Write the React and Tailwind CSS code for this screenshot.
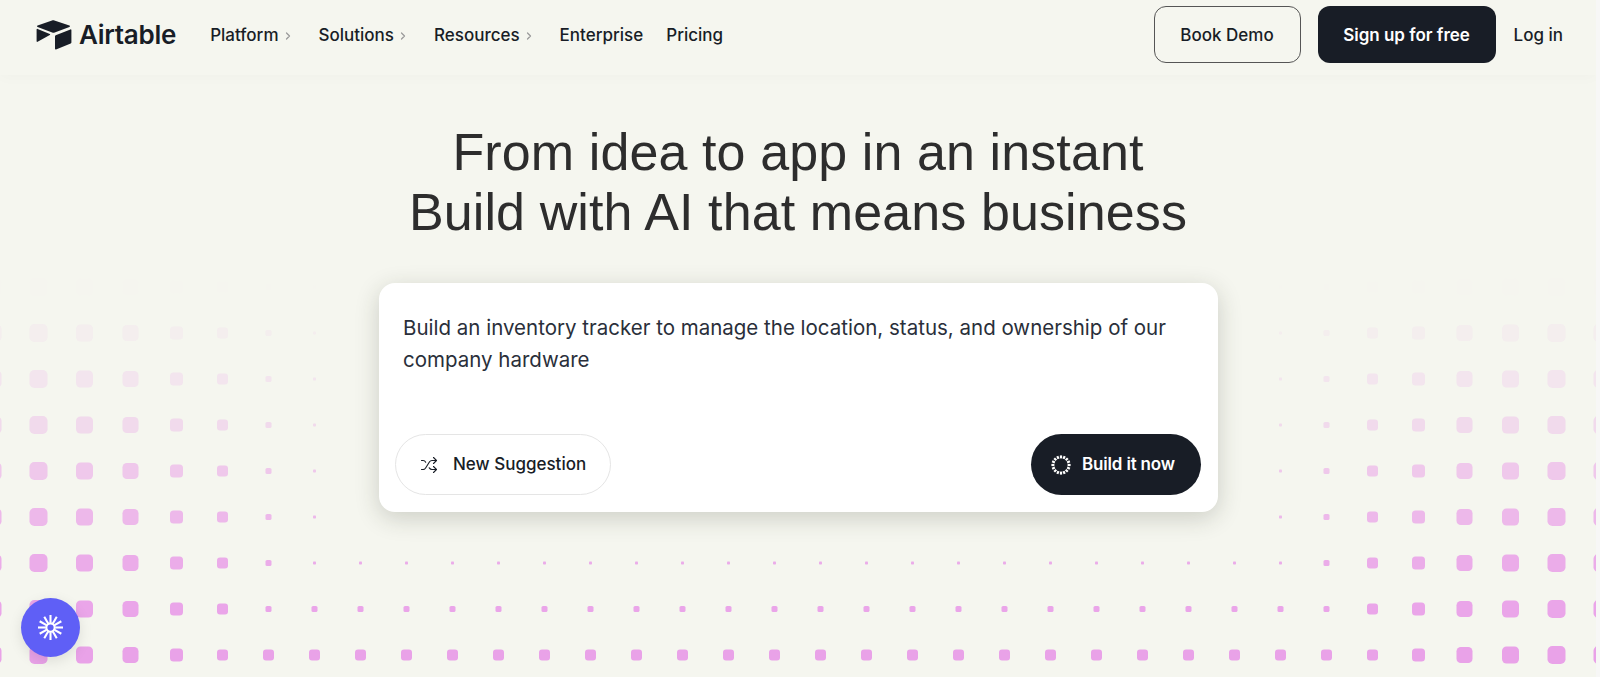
import { ChevronRight, Shuffle } from "lucide-react";

const inter = "font-['Inter',sans-serif]";

// dot field: size depends on distance from the page edge and on the row
const colSizes = [18, 18, 17, 16, 13, 11, 6, 3];
const rowSizes = { 7: 3, 8: 6, 9: 11 };
const rowAlpha = [0.004, 0.012, 0.1, 0.19, 0.33, 0.55, 0.74, 0.88, 0.97, 1];

function DotField() {
    const dots = [];
    for (let r = 0; r < 10; r++) {
        for (let c = 0; c < 36; c++) {
            const fromEdge = Math.min(c, 35 - c);
            const size = Math.max(colSizes[fromEdge] || 0, rowSizes[r] || 0);
            if (!size) continue;
            dots.push(
                <rect
                    key={r + "-" + c}
                    x={-7.5 + c * 46 - size / 2}
                    y={241 + r * 46 - size / 2}
                    width={size}
                    height={size}
                    rx={size * 0.27}
                    fill="#e9a2e8"
                    opacity={rowAlpha[r]}
                />
            );
        }
    }
    return (
        <svg className="absolute inset-0 w-full h-full" width="1596" height="677" viewBox="0 0 1596 677">
            {dots}
        </svg>
    );
}

function Logo() {
    return (
        <div className="flex items-center gap-[7px]">
            <svg width="36" height="30" viewBox="0 0 36 30" fill="#181d26">
                <path d="M16 .5 1.6 5.6c-.8.3-.8 1 0 1.3l14.6 5.7c.8.3 1.700.3 2.500 0l14.700-5.700c.8-.3.8-1 0-1.300L18.400.5c-.8-.3-1.600-.3-2.400 0Z" />
                <path d="M.6 9.600c0-.6.5-.9 1-.7l12.200 5.100c.5.2.5.800 0 1.100L1.600 21.800c-.5.300-1 0-1-.6Z" />
                <path d="M19 16.200c0-.4.3-.8.7-1l14.700-5.800c.5-.2 1 .1 1 .7v12.500c0 .4-.3.800-.7 1l-14.700 5.800c-.5.200-1-.1-1-.7Z" />
            </svg>
            <span className={`${inter} text-[26px] leading-none font-semibold tracking-[-0.01em] text-[#181d26]`}>Airtable</span>
        </div>
    );
}

function NavItem({ label, chevron }) {
    return (
        <a className="flex items-center gap-[3px] text-[17px] font-medium text-[#181d26]">
            {label}
            {chevron && <ChevronRight size={12} strokeWidth={2.5} className="mr-[2px] text-[#9a9a9a]" />}
        </a>
    );
}

function SparkRing() {
    const ticks = [];
    for (let i = 0; i < 16; i++) {
        ticks.push(
            <rect key={i} x="8.900" y="0.400" width="2.200" height="3" fill="white" transform={`rotate(${i * 22.5} 10 10)`} />
        );
    }
    return <svg width="20" height="20" viewBox="0 0 20 20">{ticks}</svg>;
}

function Burst() {
    const rays = [];
    for (let i = 0; i < 12; i++) {
        rays.push(
            <line key={i} x1="12" y1="7.500" x2="12" y2="0" stroke="white" strokeWidth="2" transform={`rotate(${i * 30} 12 12)`} />
        );
    }
    return (
        <svg width="25" height="25" viewBox="0 0 24 24" fill="none">
            {rays}
            <circle cx="12" cy="12" r="4" stroke="white" strokeWidth="2" />
        </svg>
    );
}

export default function App() {
    return (
        <div className={`${inter} flex h-[677px] w-full overflow-hidden bg-[#f7f7f6]`}>
            <div className="relative flex-1 flex flex-col bg-[#f5f6ef] overflow-hidden">
                <DotField />

                <header className="relative z-10 flex items-center justify-between h-[75px] pl-[36px] pr-[33px] pb-[6px] bg-[#f5f6ef] shadow-[0_2px_14px_rgba(0,0,0,0.025)]">
                    <div className="flex items-center">
                        <Logo />
                        <nav className="flex items-center gap-[23px] ml-[34px] mt-[2px]">
                            <NavItem label="Platform" chevron />
                            <NavItem label="Solutions" chevron />
                            <NavItem label="Resources" chevron />
                            <NavItem label="Enterprise" />
                            <NavItem label="Pricing" />
                        </nav>
                    </div>
                    <div className="flex items-center">
                        <button className="w-[147px] h-[57px] pt-[2px] rounded-[12px] border border-[#555] text-[17px] font-medium text-[#181d26]">Book Demo</button>
                        <button className="w-[178px] h-[57px] pt-[2px] ml-[17px] rounded-[12px] bg-[#181d26] text-[17px] font-semibold text-white">Sign up for free</button>
                        <a className="ml-[18px] mt-[2px] text-[17px] font-medium text-[#181d26]">Log in</a>
                    </div>
                </header>

                <main className="relative z-10 flex flex-col items-center pt-[47px]">
                    <h1 className="font-['Liberation_Sans',sans-serif] text-[52px] leading-[60px] font-normal tracking-[0.002em] text-[#2d2d2d] text-center">
                        From idea to app in an instant
                        <br />
                        Build with AI that means business
                    </h1>
                    <div className="mt-[41px] ml-[1px] w-[839px] h-[229px] flex flex-col justify-between bg-white rounded-[16px] shadow-[0_6px_24px_rgba(40,45,30,0.2)] pt-[29px] pb-[17px] pl-[16px] pr-[17px]">
                        <p className="pl-[8px] pr-[30px] text-[20.5px] leading-[32px] text-[#2a2f3a]">
                            Build an inventory tracker to manage the location, status, and ownership of our company hardware
                        </p>
                        <div className="flex items-center justify-between">
                            <button className="flex items-center gap-[15px] w-[216px] h-[61px] pl-[24px] rounded-full border border-[#e5e5e5] bg-white text-[17px] font-medium text-[#181d26]">
                                <Shuffle size={18} strokeWidth={1.5} />
                                New Suggestion
                            </button>
                            <button className="flex items-center gap-[11px] w-[170px] h-[61px] pl-[20px] rounded-full bg-[#181d26] text-[17px] font-semibold tracking-[-0.01em] text-white">
                                <SparkRing />
                                Build it now
                            </button>
                        </div>
                    </div>
                </main>

                <button className="absolute z-20 left-[21px] top-[598px] w-[59px] h-[59px] flex items-center justify-center rounded-full bg-[#5f5ff6] shadow-[0_4px_14px_rgba(0,0,0,0.1)]">
                    <Burst />
                </button>
            </div>
            <div className="w-1 shrink-0 bg-[#f7f7f6]" />
        </div>
    );
}
